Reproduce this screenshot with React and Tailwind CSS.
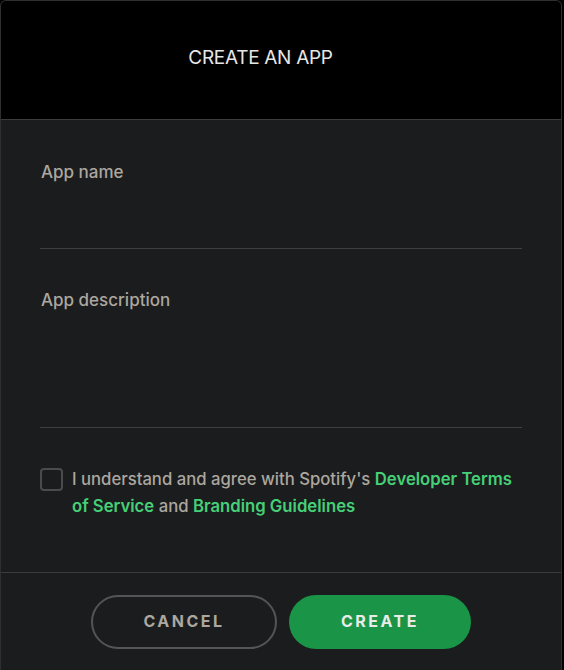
export default function App() {
  const font = { fontFamily: 'Inter, "Noto Sans", sans-serif' };
  return (
    <div className="min-h-screen bg-black" style={font}>
      <div className="w-[562px] h-[670px] flex flex-col bg-[#1b1c1e] border-x border-t border-[#2e2f31] rounded-t-[6px] overflow-hidden">
        <div className="h-[119px] shrink-0 bg-black border-b border-[#3b3c3e] flex items-center justify-center pr-[41px] pb-[6px]">
          <h1 className="text-[19px] leading-none text-[#e6e6e6] font-normal tracking-[-0.3px]">CREATE AN APP</h1>
        </div>
        <div className="flex-1 px-[39px] pt-[40px] flex flex-col">
          <label className="text-[17px] leading-[24px] text-[#aca79f] font-medium pl-[1px]">App name</label>
          <div className="h-[65px] border-b border-[#3e3f41]"></div>
          <label className="mt-[39px] text-[17px] leading-[24px] text-[#aca79f] font-medium pl-[1px]">App description</label>
          <div className="h-[116px] border-b border-[#3e3f41]"></div>
          <div className="mt-[38px] flex items-start gap-[9px]">
            <div className="mt-[2px] w-[23px] h-[23px] shrink-0 rounded-[4px] border-2 border-[#4a4b4d]"></div>
            <p className="text-[16.7px] leading-[27px] text-[#aca79f] font-medium">
              I understand and agree with Spotify's{" "}
              <span className="text-[#45d077] font-semibold">Developer Terms of Service</span> and{" "}
              <span className="text-[#45d077] font-semibold">Branding Guidelines</span>
            </p>
          </div>
        </div>
        <div className="h-[98px] shrink-0 border-t border-[#3b3c3e] flex items-start justify-center gap-[12px] pt-[22px]">
          <button className="w-[186px] h-[54px] rounded-full border-2 border-[#545557] text-[#aca79f] text-[16px] leading-none font-bold tracking-[2.5px] pb-[2px]">
            CANCEL
          </button>
          <button className="w-[182px] h-[54px] rounded-full bg-[#1a9446] text-[#e8ece8] text-[16px] leading-none font-bold tracking-[2.5px] pb-[2px]">
            CREATE
          </button>
        </div>
      </div>
    </div>
  );
}
